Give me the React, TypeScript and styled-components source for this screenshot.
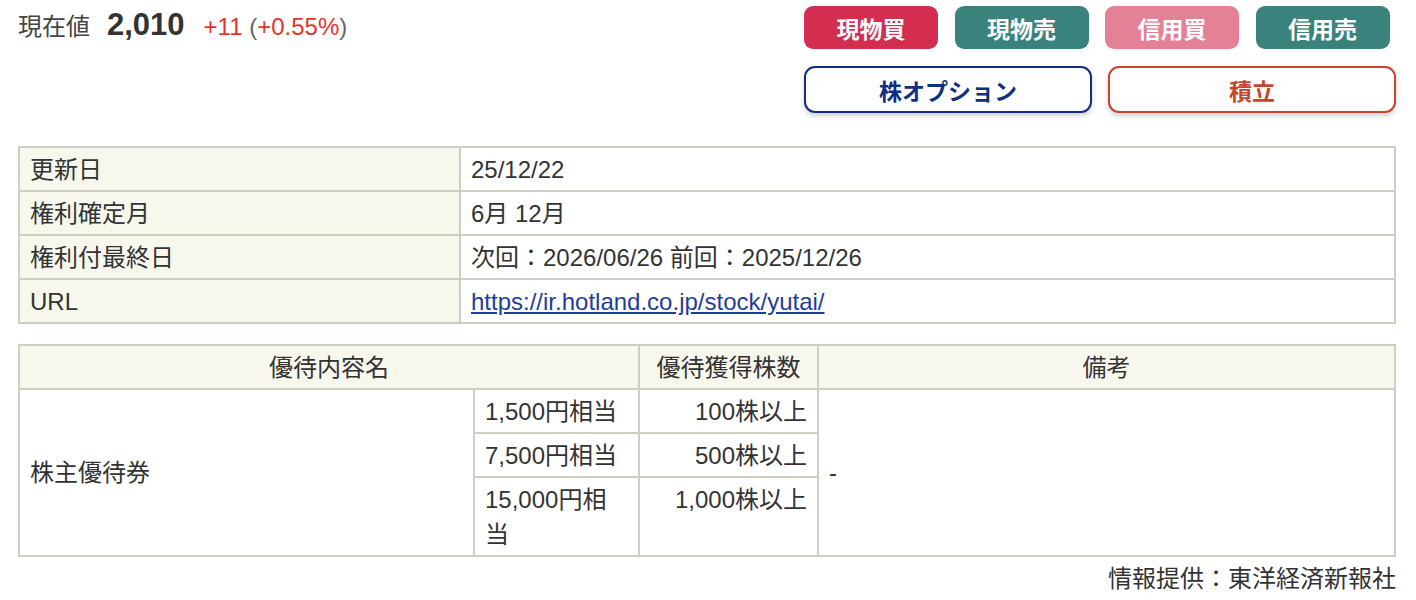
import React from 'react';
import styled, { createGlobalStyle } from 'styled-components';

const GlobalStyle = createGlobalStyle`
  body {
    margin: 0;
    background: #ffffff;
    font-family: "Liberation Sans", "Noto Sans CJK JP", sans-serif;
    color: #333333;
  }
`;

const Page = styled.div`
  padding: 6px 20px 0 18px;
  font-size: 24px;
`;

const Header = styled.div`
  display: flex;
  justify-content: space-between;
  align-items: flex-start;
`;

const PriceLine = styled.div`
  display: flex;
  align-items: baseline;
  height: 38px;
  line-height: 38px;
`;

const PriceLabel = styled.span`
  font-size: 24px;
  color: #444444;
`;

const PriceValue = styled.span`
  font-size: 31px;
  font-weight: bold;
  color: #333333;
  margin-left: 17px;
`;

const Change = styled.span`
  font-size: 24px;
  color: #666666;
  margin-left: 19px;
`;

const Red = styled.span`
  color: #e5332a;
`;

const ButtonPanel = styled.div`
  width: 592px;
  display: flex;
  flex-direction: column;
  gap: 17px;
`;

const TradeRow = styled.div`
  display: grid;
  grid-template-columns: repeat(4, 134px);
  column-gap: 16.5px;
`;

const TradeButton = styled.button<{ $bg: string }>`
  height: 43px;
  border: none;
  border-radius: 9px;
  background: ${p => p.$bg};
  color: #ffffff;
  font-family: "Noto Sans CJK JP", sans-serif;
  font-weight: bold;
  font-size: 23px;
  padding: 0;
  cursor: pointer;
`;

const OptionRow = styled.div`
  display: grid;
  grid-template-columns: repeat(2, 1fr);
  column-gap: 16px;
`;

const OutlineButton = styled.button<{ $color: string }>`
  height: 47px;
  border: 2px solid ${p => p.$color};
  border-radius: 11px;
  background: #ffffff;
  color: ${p => p.$color};
  font-family: "Noto Sans CJK JP", sans-serif;
  font-weight: bold;
  font-size: 23px;
  padding: 0;
  box-shadow: 0 3px 5px rgba(0, 0, 0, 0.18);
  cursor: pointer;
`;

const Table = styled.table<{ $top: number }>`
  width: 100%;
  table-layout: fixed;
  border-collapse: collapse;
  margin-top: ${p => p.$top}px;
  font-size: 24px;
  line-height: 35px;
`;

const Cell = styled.td<{ $align?: string; $valign?: string; $head?: boolean }>`
  border: 2px solid #cfcfc1;
  padding: 3.5px 10px;
  text-align: ${p => p.$align || 'left'};
  vertical-align: ${p => p.$valign || 'middle'};
  background: ${p => (p.$head ? '#f7f7ee' : '#ffffff')};
  color: #333333;
  overflow-wrap: break-word;
`;

const HeadCell = styled.th`
  border: 2px solid #cfcfc1;
  padding: 3.5px 10px;
  text-align: center;
  font-weight: normal;
  background: #f7f7ee;
  color: #333333;
`;

const Link = styled.a`
  color: #1f3e9a;
  text-decoration: underline;
`;

const Source = styled.div`
  text-align: right;
  font-size: 24px;
  line-height: 44px;
  color: #333333;
`;

const info = [
  { label: '更新日', value: '25/12/22' },
  { label: '権利確定月', value: '6月 12月' },
  { label: '権利付最終日', value: '次回：2026/06/26 前回：2025/12/26' },
];

const benefits = [
  { amount: '1,500円相当', shares: '100株以上' },
  { amount: '7,500円相当', shares: '500株以上' },
  { amount: '15,000円相当', shares: '1,000株以上' },
];

const App: React.FC = () => {
  return (
    <Page>
      <GlobalStyle />
      <Header>
        <PriceLine>
          <PriceLabel>現在値</PriceLabel>
          <PriceValue>2,010</PriceValue>
          <Change>
            <Red>+11</Red> (<Red>+0.55%</Red>)
          </Change>
        </PriceLine>
        <ButtonPanel>
          <TradeRow>
            <TradeButton $bg="#d32e4f">現物買</TradeButton>
            <TradeButton $bg="#3a837d">現物売</TradeButton>
            <TradeButton $bg="#e58196">信用買</TradeButton>
            <TradeButton $bg="#3a837d">信用売</TradeButton>
          </TradeRow>
          <OptionRow>
            <OutlineButton $color="#0f2f82">株オプション</OutlineButton>
            <OutlineButton $color="#c8452b">積立</OutlineButton>
          </OptionRow>
        </ButtonPanel>
      </Header>

      <Table $top={33}>
        <colgroup>
          <col style={{ width: 441 }} />
          <col />
        </colgroup>
        <tbody>
          {info.map(row => (
            <tr key={row.label}>
              <Cell $head>{row.label}</Cell>
              <Cell>{row.value}</Cell>
            </tr>
          ))}
          <tr>
            <Cell $head>URL</Cell>
            <Cell>
              <Link href="#">https://ir.hotland.co.jp/stock/yutai/</Link>
            </Cell>
          </tr>
        </tbody>
      </Table>

      <Table $top={20}>
        <colgroup>
          <col style={{ width: 455 }} />
          <col style={{ width: 165 }} />
          <col style={{ width: 179 }} />
          <col />
        </colgroup>
        <thead>
          <tr>
            <HeadCell colSpan={2}>優待内容名</HeadCell>
            <HeadCell>優待獲得株数</HeadCell>
            <HeadCell>備考</HeadCell>
          </tr>
        </thead>
        <tbody>
          {benefits.map((b, i) => (
            <tr key={b.amount}>
              {i === 0 && <Cell rowSpan={3}>株主優待券</Cell>}
              <Cell $valign="top">{b.amount}</Cell>
              <Cell $align="right" $valign="top">{b.shares}</Cell>
              {i === 0 && <Cell rowSpan={3}>-</Cell>}
            </tr>
          ))}
        </tbody>
      </Table>

      <Source>情報提供：東洋経済新報社</Source>
    </Page>
  );
};

export default App;
